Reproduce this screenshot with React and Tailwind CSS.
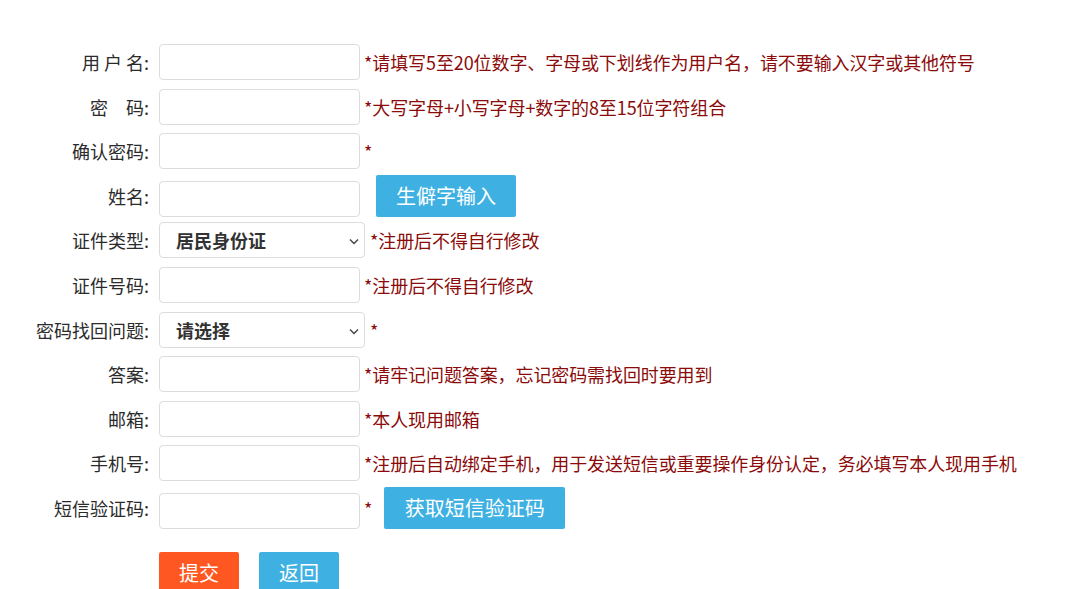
import React from 'react'

const FONT = 'font-["Noto_Sans_CJK_SC","Microsoft_YaHei",sans-serif]'

function Label({ children, className = '' }) {
  return (
    <div className={`w-[149px] shrink-0 text-right text-[18px] leading-none text-[#2b2b2b] whitespace-pre ${className}`}>
      {children}
    </div>
  )
}

function TextInput() {
  return (
    <input
      type="text"
      className="ml-[10px] h-[36px] w-[201px] shrink-0 rounded-[4px] border border-[#dcdcdc] bg-white px-2 text-[16px] outline-none"
    />
  )
}

function Select({ value }) {
  return (
    <div className="relative ml-[10px] h-[36px] w-[206px] shrink-0">
      <select className="h-full w-full appearance-none rounded-[4px] border border-[#dcdcdc] bg-white pl-4 text-[18px] font-bold text-[#333] outline-none">
        <option>{value}</option>
      </select>
      <svg className="pointer-events-none absolute right-[6px] top-[16px]" width="10" height="7" viewBox="0 0 10 7" fill="none">
        <path d="M1 1.5 L5 5.5 L9 1.5" stroke="#444" strokeWidth="1.4" />
      </svg>
    </div>
  )
}

function Hint({ children, className = '' }) {
  return <span className={`ml-[4px] text-[18px] leading-none tracking-[-0.1px] text-[#8b0a0a] whitespace-nowrap ${className}`}>{children}</span>
}

function BlueButton({ children, className = '' }) {
  return (
    <button type="button" className={`h-[42px] rounded-[2px] bg-[#3eb1e2] text-[20px] leading-none text-white ${className}`}>
      {children}
    </button>
  )
}

export default function App() {
  return (
    <div className={`min-h-screen bg-white ${FONT}`}>
      <form className="flex flex-col pt-[44px]">
        {/* 用户名 */}
        <div className="flex items-center">
          <Label>用 户 名:</Label>
          <TextInput />
          <Hint>*请填写5至20位数字、字母或下划线作为用户名，请不要输入汉字或其他符号</Hint>
        </div>

        <div className="mt-[8.5px] flex items-center">
          <Label>密　码:</Label>
          <TextInput />
          <Hint>*大写字母+小写字母+数字的8至15位字符组合</Hint>
        </div>

        <div className="mt-[8.5px] flex items-center">
          <Label>确认密码:</Label>
          <TextInput />
          <Hint>*</Hint>
        </div>

        {/* 姓名 + 生僻字 */}
        <div className="mt-[6px] flex items-end">
          <Label className="self-center">姓名:</Label>
          <TextInput />
          <BlueButton className="ml-[16px] w-[140px]">生僻字输入</BlueButton>
        </div>

        <div className="mt-[5px] flex items-center">
          <Label>证件类型:</Label>
          <Select value="居民身份证" />
          <Hint className="ml-[5px]">*注册后不得自行修改</Hint>
        </div>

        <div className="mt-[9px] flex items-center">
          <Label>证件号码:</Label>
          <TextInput />
          <Hint>*注册后不得自行修改</Hint>
        </div>

        <div className="mt-[9px] flex items-center">
          <Label>密码找回问题:</Label>
          <Select value="请选择" />
          <Hint className="ml-[5px]">*</Hint>
        </div>

        <div className="mt-[8px] flex items-center">
          <Label>答案:</Label>
          <TextInput />
          <Hint>*请牢记问题答案，忘记密码需找回时要用到</Hint>
        </div>

        <div className="mt-[9px] flex items-center">
          <Label>邮箱:</Label>
          <TextInput />
          <Hint>*本人现用邮箱</Hint>
        </div>

        <div className="mt-[8px] flex items-center">
          <Label>手机号:</Label>
          <TextInput />
          <Hint>*注册后自动绑定手机，用于发送短信或重要操作身份认定，务必填写本人现用手机</Hint>
        </div>

        {/* 短信验证码 */}
        <div className="mt-[6px] flex items-end">
          <Label className="self-center">短信验证码:</Label>
          <TextInput />
          <Hint className="self-center">*</Hint>
          <BlueButton className="ml-[12px] w-[181px]">获取短信验证码</BlueButton>
        </div>

        <div className="mt-[23px] flex gap-5 pl-[159px]">
          <button type="button" className="h-[42px] w-[80px] rounded-[2px] bg-[#ff5722] text-[20px] leading-none text-white">
            提交
          </button>
          <BlueButton className="w-[80px]">返回</BlueButton>
        </div>
      </form>
    </div>
  )
}
